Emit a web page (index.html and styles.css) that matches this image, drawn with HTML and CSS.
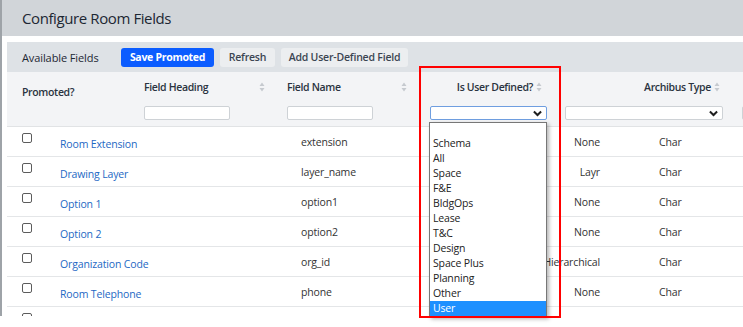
FILE: index.html
```
<!DOCTYPE html>
<html>
<head>
<meta charset="utf-8">
<link rel="stylesheet" href="styles.css">
</head>
<body>
<div class="app">
  <div class="titlebar"><h1>Configure Room Fields</h1></div>
  <div class="panel">
    <div class="toolbar">
      <span class="toolbar-title">Available Fields</span>
      <button class="btn btn-primary btn-save">Save Promoted</button>
      <button class="btn btn-secondary btn-refresh">Refresh</button>
      <button class="btn btn-secondary btn-add">Add User-Defined Field</button>
    </div>
    <div class="thead">
      <div class="th th-promoted"><span class="label">Promoted?</span></div>
      <div class="th">
        <div class="label-row"><span class="label">Field Heading</span><svg class="sort" viewBox="0 0 6 10"><path d="M3 0.5 L5.5 4 L0.5 4 Z M3 9.5 L5.5 6 L0.5 6 Z"/></svg></div>
        <div class="filter filter-text"></div>
      </div>
      <div class="th th-name">
        <div class="label-row"><span class="label">Field Name</span><svg class="sort" viewBox="0 0 6 10"><path d="M3 0.5 L5.5 4 L0.5 4 Z M3 9.5 L5.5 6 L0.5 6 Z"/></svg></div>
        <div class="filter filter-text"></div>
      </div>
      <div class="th th-user">
        <div class="label-row end"><span class="label">Is User Defined?</span><svg class="sort" viewBox="0 0 6 10"><path d="M3 0.5 L5.5 4 L0.5 4 Z M3 9.5 L5.5 6 L0.5 6 Z"/></svg></div>
        <div class="filter filter-select focused"><svg class="chev" viewBox="0 0 10 7"><path d="M1 1.2 L5 5.2 L9 1.2"/></svg></div>
      </div>
      <div class="th th-type">
        <div class="label-row end"><span class="label">Archibus Type</span><svg class="sort" viewBox="0 0 6 10"><path d="M3 0.5 L5.5 4 L0.5 4 Z M3 9.5 L5.5 6 L0.5 6 Z"/></svg></div>
        <div class="filter filter-select wide"><svg class="chev" viewBox="0 0 10 7"><path d="M1 1.2 L5 5.2 L9 1.2"/></svg></div>
      </div>
      <div class="th th-more">
        <div class="label-row"></div>
        <div class="filter filter-text"></div>
      </div>
    </div>
    <div class="rows">
      <div class="row"><span class="cb"></span><a class="link">Room Extension</a><span class="cell">extension</span><span class="cell right">None</span><span class="cell type">Char</span></div>
      <div class="row"><span class="cb"></span><a class="link">Drawing Layer</a><span class="cell">layer_name</span><span class="cell right">Layr</span><span class="cell type">Char</span></div>
      <div class="row"><span class="cb"></span><a class="link">Option 1</a><span class="cell">option1</span><span class="cell right">None</span><span class="cell type">Char</span></div>
      <div class="row"><span class="cb"></span><a class="link">Option 2</a><span class="cell">option2</span><span class="cell right">None</span><span class="cell type">Char</span></div>
      <div class="row"><span class="cb"></span><a class="link">Organization Code</a><span class="cell">org_id</span><span class="cell right">Hierarchical</span><span class="cell type">Char</span></div>
      <div class="row"><span class="cb"></span><a class="link">Room Telephone</a><span class="cell">phone</span><span class="cell right">None</span><span class="cell type">Char</span></div>
      <div class="row"><span class="cb"></span><a class="link"></a><span class="cell"></span><span class="cell right"></span><span class="cell type"></span></div>
    </div>
  </div>
</div>

<ul class="dropdown">
  <li class="opt empty"></li>
  <li class="opt">Schema</li>
  <li class="opt">All</li>
  <li class="opt">Space</li>
  <li class="opt">F&amp;E</li>
  <li class="opt">BldgOps</li>
  <li class="opt">Lease</li>
  <li class="opt">T&amp;C</li>
  <li class="opt">Design</li>
  <li class="opt">Space Plus</li>
  <li class="opt">Planning</li>
  <li class="opt">Other</li>
  <li class="opt selected">User</li>
</ul>
<div class="callout"></div>
</body>
</html>
```
FILE: styles.css
```
* { box-sizing: border-box; }
body {
  margin: 0;
  background: #fff;
  font-family: "Open Sans", "Noto Sans", "DejaVu Sans", sans-serif;
  color: #333;
}
.app {
  height: 316px;
  overflow: hidden;
  border-left: 2px solid #9ea3a8;
}
.titlebar {
  height: 36px;
  background: #d1d5d9;
  display: flex;
  align-items: center;
  padding-left: 20px;
}
.titlebar h1 {
  margin: 0;
  font-size: 15px;
  letter-spacing: -0.4px;
  font-weight: 400;
  color: #1d2733;
}
.panel {
  margin: 6px 0 0 5px;
}
.toolbar {
  height: 30px;
  background: #dee2e6;
  display: flex;
  align-items: center;
  padding-left: 15px;
}
.toolbar-title {
  width: 99px;
  font-size: 11px;
  letter-spacing: -0.1px;
  color: #1d2733;
}
.btn {
  height: 19px;
  border: 0;
  border-radius: 3px;
  padding: 0;
  margin-right: 6px;
  font-family: inherit;
  font-size: 10.5px;
  letter-spacing: -0.2px;
  font-weight: 600;
  text-align: center;
}
.btn-primary {
  background: #0b5cff;
  color: #fff;
  font-weight: 700;
  letter-spacing: -0.3px;
}
.btn-secondary {
  background: #eceef0;
  color: #3b4552;
}
.btn-save { width: 93px; }
.btn-refresh { width: 55px; }
.btn-add { width: 127px; }

.thead {
  height: 55px;
  background: #f3f4f6;
  border-bottom: 1px solid #e1e3e5;
  display: grid;
  grid-template-columns: 130px 143px 140px 140px 173px 1fr;
}
.th {
  padding-top: 7px;
  display: flex;
  flex-direction: column;
}
.th-promoted {
  padding-left: 15px;
  padding-top: 12px;
}
.label {
  font-size: 10.5px;
  letter-spacing: -0.35px;
  line-height: 16px;
  font-weight: 600;
  color: #2a3340;
}
.label-row {
  height: 16px;
  display: flex;
  align-items: center;
  justify-content: space-between;
  padding-left: 7px;
  padding-right: 15px;
  margin-bottom: 11px;
}
.th-name .label-row { padding-right: 13px; }
.label-row.end {
  justify-content: flex-end;
  gap: 3px;
}
.th-user .label-row { padding-right: 18px; }
.th-type .label-row { padding-right: 13px; }
.sort {
  width: 6px;
  height: 10px;
  fill: #c6cacf;
}
.filter {
  height: 14px;
  background: #fff;
  border: 1px solid #ced2d6;
  border-radius: 2px;
  position: relative;
}
.filter-text {
  width: 86px;
  margin-left: 7px;
}
.th-more .filter-text { margin-left: 9px; }
.filter-select {
  width: 117px;
  margin-left: 10px;
  display: flex;
  align-items: center;
  justify-content: flex-end;
  padding-right: 4px;
}
.filter-select.focused { border-color: #6f9ee0; }
.filter-select.wide {
  width: 158px;
  margin-left: 5px;
}
.chev {
  width: 9px;
  height: 7px;
  fill: none;
  stroke: #1f1f1f;
  stroke-width: 2.2;
}

.row {
  height: 30px;
  border-bottom: 1px solid #e4e6e8;
  display: grid;
  grid-template-columns: 53px 241px 119px 180px 1fr;
  font-size: 10.5px;
  letter-spacing: -0.15px;
  line-height: 16px;
}
.cb {
  width: 10px;
  height: 10px;
  margin: 6px 0 0 15px;
  border: 1px solid #5c5c5c;
  border-radius: 2px;
  background: #fff;
}
.link {
  color: #1d68c4;
  padding-top: 9px;
}
.cell {
  padding-top: 7px;
  color: #333;
}
.cell.right { text-align: right; }
.cell.type { padding-left: 59px; }

.dropdown {
  position: absolute;
  left: 429px;
  top: 122px;
  width: 118px;
  margin: 0;
  padding: 0;
  list-style: none;
  background: #fff;
  border: 1px solid #777;
  box-shadow: 2px 2px 4px rgba(0, 0, 0, 0.3);
}
.opt {
  height: 15px;
  line-height: 15px;
  padding-left: 3px;
  font-size: 10.5px;
  letter-spacing: -0.15px;
  color: #222;
}
.opt.empty { height: 13px; }
.opt.selected {
  background: #1e90ff;
  color: #fff;
}
.callout {
  position: absolute;
  left: 419px;
  top: 66px;
  width: 142px;
  height: 252px;
  border: 2px solid #ff0000;
}
```
